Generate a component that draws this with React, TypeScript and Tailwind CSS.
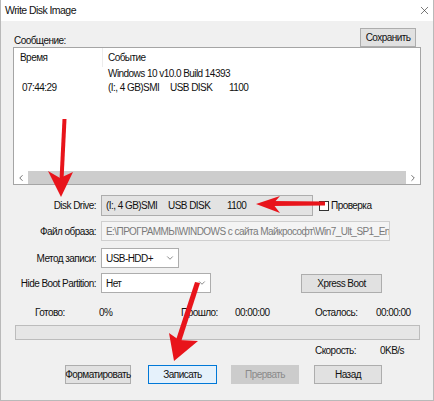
import { X, ChevronDown, ChevronLeft, ChevronRight } from "lucide-react";

const font = "font-['Liberation_Sans',_Arial,_sans-serif] tracking-[-0.55px]";

function Btn({ label, w, variant = "normal" }: { label: string; w: string; variant?: "normal" | "active" | "disabled" }) {
	const tone =
		variant === "active"
			? "border-[#0078d7] bg-[#e5f1fb] text-[#111]"
			: variant === "disabled"
				? "border-[#cccccc] bg-[#cccccc] text-[#8a8a8a]"
				: "border-[#adadad] bg-[#e1e1e1] text-[#111]";
	return (
		<div className={`${w} flex h-[19px] items-center justify-center whitespace-nowrap border text-[10px] ${tone}`}>
			{label}
		</div>
	);
}

function Label({ text }: { text: string }) {
	return <div className="w-[100px] shrink-0 whitespace-nowrap pr-[5px] text-right text-[10px] text-[#111]">{text}</div>;
}

function DiskCols() {
	return (
		<>
			<span className="w-[62px] whitespace-nowrap">(I:, 4 GB)SMI</span>
			<span className="w-[59px] whitespace-nowrap">USB DISK</span>
			<span>1100</span>
		</>
	);
}

function Arrows() {
	return (
		<svg className="pointer-events-none absolute left-0 top-0" width="434" height="401" viewBox="0 0 434 401">
			<g fill="#e8141b" stroke="none">
				<polygon points="61.5,119 65.5,119 62.5,180 58.5,180" />
				<polygon points="47,171 59,178 72,172 60,197" />
				<polygon points="270,201 324,201.5 324,205.5 270,206" />
				<polygon points="255,204 279,196 272,204 279,213" />
				<polygon points="194,282 199,283 179,345 174,343" />
				<polygon points="168,333 178,340 197,341 173,361" />
			</g>
		</svg>
	);
}

export default function App() {
	return (
		<div className={`${font} relative h-[401px] w-[434px] overflow-hidden border-x border-b border-[#b9b9b9] bg-[#f0f0f0]`}>
			<div className="flex h-[21px] items-center justify-between bg-white pl-[4px] pr-[2px]">
				<span className="text-[10.5px] text-[#111]">Write Disk Image</span>
				<X className="h-[13px] w-[13px] text-[#333]" strokeWidth={1.2} />
			</div>

			<div className="mt-[8px] flex h-[18px] items-end justify-between pl-[13px] pr-[17px]">
				<span className="pb-[1px] text-[10px] leading-none text-[#111]">Сообщение:</span>
				<Btn label="Сохранить" w="w-[56px]" />
			</div>

			<div className="ml-[12px] flex h-[138px] w-[408px] flex-col border border-[#a5a5a5] bg-white">
				<div className="flex h-[19px] items-center text-[10px] text-[#111]">
					<div className="flex h-full w-[89px] items-center border-r border-[#ececec] pl-[6px]">Время</div>
					<div className="pl-[5px]">Событие</div>
				</div>
				<div className="flex h-[13px] items-center text-[10px] text-[#111]">
					<div className="w-[89px]" />
					<div className="whitespace-nowrap pl-[5px]">Windows 10 v10.0 Build 14393</div>
				</div>
				<div className="flex h-[14px] items-center text-[10px] text-[#111]">
					<div className="w-[89px] pl-[8px]">07:44:29</div>
					<div className="flex pl-[5px]">
						<DiskCols />
					</div>
				</div>
				<div className="flex-1" />
				<div className="flex h-[13px] items-center">
					<ChevronLeft className="h-[10px] w-[14px] text-[#555]" strokeWidth={2} />
					<div className="h-full flex-1 bg-[#cdcdcd]" />
					<ChevronRight className="h-[10px] w-[14px] text-[#555]" strokeWidth={2} />
				</div>
			</div>

			<div className="mt-[10px] flex h-[21px] items-center">
				<Label text="Disk Drive:" />
				<div className="flex h-[21px] w-[212px] items-center border border-[#adadad] bg-[#e3e3e3] pl-[4px] text-[10px] text-[#111]">
					<DiskCols />
				</div>
				<div className="ml-[6px] h-[10px] w-[10px] border border-[#333] bg-white" />
				<span className="ml-[2px] text-[10px] text-[#111]">Проверка</span>
			</div>

			<div className="mt-[5px] flex h-[20px] items-center">
				<Label text="Файл образа:" />
				<div className="flex h-[20px] w-[289px] items-center overflow-hidden whitespace-nowrap border border-[#cfcfcf] bg-[#f4f4f4] pl-[4px] text-[10px] text-[#7a7a7a]">
					E:\ПРОГРАММЫ\WINDOWS с сайта Майкрософт\Win7_Ult_SP1_Eng
				</div>
			</div>

			<div className="mt-[7px] flex h-[20px] items-center">
				<Label text="Метод записи:" />
				<div className="flex h-[20px] w-[78px] items-center justify-between border border-[#adadad] bg-white pl-[4px] pr-[3px] text-[10px] text-[#111]">
					<span>USB-HDD+</span>
					<ChevronDown className="h-[10px] w-[10px] text-[#444]" strokeWidth={1.5} />
				</div>
			</div>

			<div className="mt-[5px] flex h-[20px] items-center">
				<Label text="Hide Boot Partition:" />
				<div className="flex h-[20px] w-[110px] items-center justify-between border border-[#adadad] bg-white pl-[4px] pr-[3px] text-[10px] text-[#111]">
					<span>Нет</span>
					<ChevronDown className="h-[10px] w-[10px] text-[#444]" strokeWidth={1.5} />
				</div>
				<div className="ml-[90px]">
					<Btn label="Xpress Boot" w="w-[81px]" />
				</div>
			</div>

			<div className="mt-[11px] flex h-[16px] items-center whitespace-nowrap text-[10px] text-[#111]">
				<span className="ml-[34px] w-[64px]">Готово:</span>
				<span className="w-[82px]">0%</span>
				<span className="w-[54px]">Прошло:</span>
				<span className="w-[80px]">00:00:00</span>
				<span className="w-[61px]">Осталось:</span>
				<span>00:00:00</span>
			</div>

			<div className="ml-[14px] mt-[5px] h-[15px] w-[405px] border border-[#bcbcbc] bg-[#e6e6e6]" />

			<div className="mt-[3px] flex h-[14px] items-center whitespace-nowrap text-[10px] text-[#111]">
				<span className="ml-[314px] w-[65px]">Скорость:</span>
				<span>0KB/s</span>
			</div>

			<div className="mt-[8px] flex items-center">
				<div className="ml-[64px]">
					<Btn label="Форматировать" w="w-[66px]" />
				</div>
				<div className="ml-[17px]">
					<Btn label="Записать" w="w-[69px]" variant="active" />
				</div>
				<div className="ml-[14px]">
					<Btn label="Прервать" w="w-[68px]" variant="disabled" />
				</div>
				<div className="ml-[15px]">
					<Btn label="Назад" w="w-[68px]" />
				</div>
			</div>

			<Arrows />
		</div>
	);
}
